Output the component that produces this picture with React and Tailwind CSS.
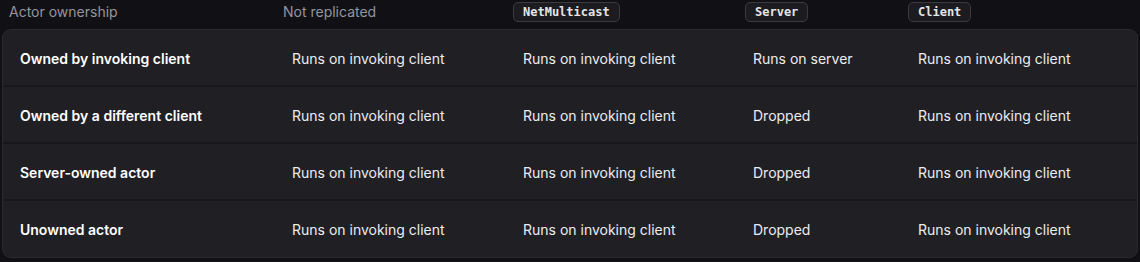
export default function App() {
  const rows = [
    ["Owned by invoking client", "Runs on invoking client", "Runs on invoking client", "Runs on server", "Runs on invoking client"],
    ["Owned by a different client", "Runs on invoking client", "Runs on invoking client", "Dropped", "Runs on invoking client"],
    ["Server-owned actor", "Runs on invoking client", "Runs on invoking client", "Dropped", "Runs on invoking client"],
    ["Unowned actor", "Runs on invoking client", "Runs on invoking client", "Dropped", "Runs on invoking client"],
  ]

  const Badge = ({ children }) => (
    <span className="inline-block rounded-[5px] border border-[#3a3a40] bg-[#1c1c20] px-[9px] py-[1px] font-['DejaVu_Sans_Mono',monospace] text-[12px] font-bold leading-[16px] text-[#e4e4e7]">
      {children}
    </span>
  )

  return (
    <div className="h-[262px] w-[1140px] bg-[#111115] font-['Inter',sans-serif] text-[14px]">
      <div className="grid h-[22px] grid-cols-[274px_230px_232px_163px_1fr] items-center pl-[9px] text-[#95959c]">
        <div>Actor ownership</div>
        <div>Not replicated</div>
        <div><Badge>NetMulticast</Badge></div>
        <div><Badge>Server</Badge></div>
        <div><Badge>Client</Badge></div>
      </div>
      <div className="mx-[3px] mt-[8px] overflow-hidden rounded-lg bg-[#202024] ring-1 ring-[#2a2a2f]">
        {rows.map((r, i) => (
          <div
            key={i}
            className={
              "grid grid-cols-[272px_231px_230px_165px_1fr] items-center pl-[17px] pt-[1px] " +
              (i < rows.length - 1 ? "h-[57px] border-b-2 border-[#18181c]" : "h-[56px]")
            }
          >
            <div className="font-semibold text-white">{r[0]}</div>
            <div className="text-[#ececef]">{r[1]}</div>
            <div className="text-[#ececef]">{r[2]}</div>
            <div className="text-[#ececef]">{r[3]}</div>
            <div className="text-[#ececef]">{r[4]}</div>
          </div>
        ))}
      </div>
    </div>
  )
}
